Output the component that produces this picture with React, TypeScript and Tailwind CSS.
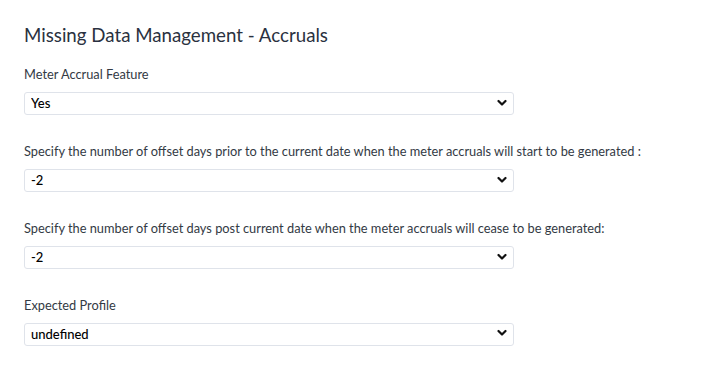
import React, { useState } from 'react';

const fields = [
  { label: 'Meter Accrual Feature', value: 'Yes', options: ['Yes', 'No'] },
  {
    label: 'Specify the number of offset days prior to the current date when the meter accruals will start to be generated :',
    value: '-2',
    options: ['-3', '-2', '-1', '0'],
  },
  {
    label: 'Specify the number of offset days post current date when the meter accruals will cease to be generated:',
    value: '-2',
    options: ['-3', '-2', '-1', '0'],
  },
  { label: 'Expected Profile', value: 'undefined', options: ['undefined'] },
];

const Chevron = () => (
  <svg width="10" height="7" viewBox="0 0 10 7" className="pointer-events-none absolute right-[7px] top-1/2 -translate-y-1/2">
    <path d="M1.5 1.5l3.5 3.5 3.5-3.5" fill="none" stroke="#111" strokeWidth="2.2" strokeLinecap="round" strokeLinejoin="round" />
  </svg>
);

const Field: React.FC<{ label: string; value: string; options: string[] }> = ({ label, value, options }) => {
  const [val, setVal] = useState(value);
  return (
    <div className="mb-[25.7px]">
      <label className="block text-[12.8px] leading-5 text-[#333a44] mb-[6px]">{label}</label>
      <div className="relative w-[490px]">
        <select
          value={val}
          onChange={(e) => setVal(e.target.value)}
          className="appearance-none w-full h-[23px] rounded-[3px] border border-[#dfe3ea] bg-white pl-[6px] pr-6 text-[13px] font-medium text-black outline-none"
        >
          {options.map((o) => (
            <option key={o} value={o}>
              {o}
            </option>
          ))}
        </select>
        <Chevron />
      </div>
    </div>
  );
};

export default function App() {
  return (
    <div className="min-h-[371px] bg-white pl-6 pt-[21px]" style={{ fontFamily: 'Lato, "Noto Sans", sans-serif' }}>
      <h2 className="text-[18.7px] leading-7 text-[#2a3140] mb-[15px]">Missing Data Management - Accruals</h2>
      {fields.map((f) => (
        <Field key={f.label} {...f} />
      ))}
    </div>
  );
}
